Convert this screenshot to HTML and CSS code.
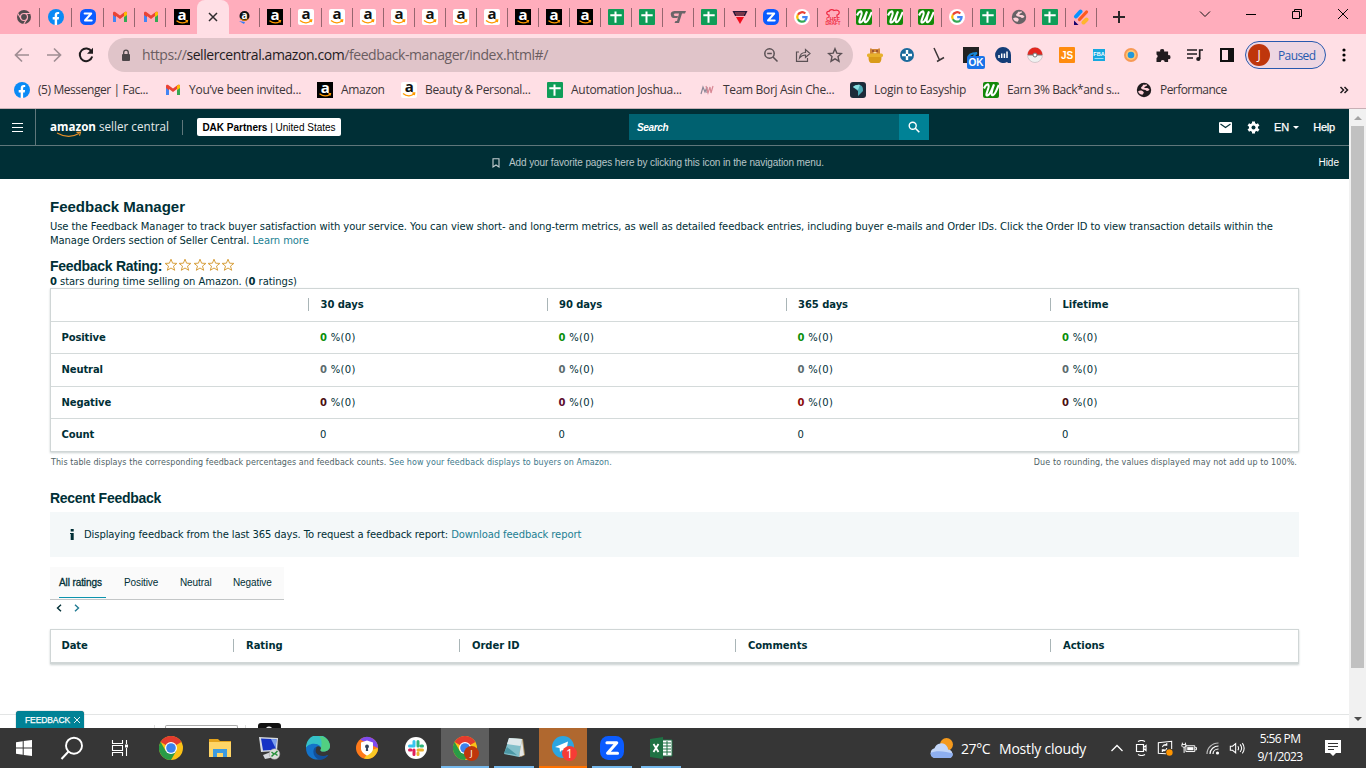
FILE: index.html
```html
<!DOCTYPE html>
<html lang="en">
<head>
<meta charset="utf-8">
<title>Feedback Manager</title>
<link rel="stylesheet" href="styles.css">
</head>
<body>

<!-- shared icons -->
<svg class="defs">
	<symbol id="fb" viewBox="0 0 16 16"><circle cx="8" cy="8" r="8" fill="#0a8af5"/><path d="M6.700 16v-5.600H4.700V8h2V6.300c0-2.100 1.200-3.200 3-3.200.8 0 1.500.1 1.500.1v1.900h-.9c-.9 0-1.200.6-1.200 1.200V8h2l-.4 2.400H9.100V16z" fill="#fff"/></symbol>
	<symbol id="zoom" viewBox="0 0 16 16"><rect width="16" height="16" rx="5.500" fill="#0b5cff"/><path d="M4.600 4.500h6.600L5 11.500h6.700" fill="none" stroke="#fff" stroke-width="2" stroke-linejoin="round" stroke-linecap="round"/></symbol>
	<symbol id="gmail" viewBox="0 0 16 16"><path d="M1 4v9h3V7z" fill="#4285f4"/><path d="M15 4v9h-3V7z" fill="#34a853"/><path d="M1 4c0-1.500 1.500-1.600 2.300-1L8 6.500 12.700 3c1-.7 2.300-.3 2.300 1l-3 3L8 10 4 7v1.300L1 6z" fill="#ea4335"/><path d="M12 3.700 13 3c1-.5 2 0 2 1.200V6l-3 2.300z" fill="#fbbc04"/></symbol>
	<symbol id="amzk" viewBox="0 0 16 16"><rect width="16" height="16" fill="#000"/><text x="8" y="10.500" text-anchor="middle" class="amz-a" fill="#fff">a</text><path d="M2.500 11.800c3.500 2.600 7.500 2.500 10.500.7M11.500 11.700l2-.1-.5 2" fill="none" stroke="#f90" stroke-width="1.200"/></symbol>
	<symbol id="amzw" viewBox="0 0 16 16"><rect width="16" height="16" rx="2" fill="#fff"/><text x="8" y="9.900" text-anchor="middle" class="amz-a" fill="#111">a</text><path d="M2 11.400c3.500 3 8 3 11 .7M11.300 11l2.400-.1-.4 2.300" fill="none" stroke="#f90" stroke-width="1.300"/></symbol>
	<symbol id="amzs" viewBox="0 0 16 16"><circle cx="8.500" cy="7" r="5" fill="#111"/><text x="8.500" y="10" text-anchor="middle" class="amz-s" fill="#fff">a</text><path d="M4 9.500c2 2 6 2.500 8.500.5" fill="none" stroke="#f90" stroke-width="1"/><path d="m3 12 6 1-1 2z" fill="#2f7df6"/></symbol>
	<symbol id="sheet" viewBox="0 0 16 16"><rect width="16" height="16" rx="1" fill="#0f9d58"/><path d="M2.300 6.200h11.400M7.500 2.500v11.200" stroke="#fff" stroke-width="2"/></symbol>
	<symbol id="goog" viewBox="0 0 16 16"><circle cx="8" cy="8" r="8" fill="#fff"/><g fill="none" stroke-width="2.200"><path d="M11.300 4.500A4.700 4.700 0 0 0 3.900 5.800" stroke="#ea4335"/><path d="M3.900 5.600a4.700 4.700 0 0 0 0 4.800" stroke="#fbbc05"/><path d="M3.900 10.200a4.700 4.700 0 0 0 7.300 1.300" stroke="#34a853"/><path d="M11 11.700a4.700 4.700 0 0 0 1.600-3.600H8.200" stroke="#4285f4"/></g></symbol>
	<symbol id="w" viewBox="0 0 16 16"><rect width="16" height="16" rx="2" fill="#138808"/><path d="M1 6.500C3 1.500 6.500 1 5.500 5.500 4.500 9.500 2 14 4.500 13.500 7.500 12.500 9 6.500 11 2.500 9 8 7.500 13.500 9.800 13.200 12.500 12.500 13.500 7.500 15.800 3" fill="none" stroke="#fff" stroke-width="2.100"/></symbol>
	<symbol id="chromeg" viewBox="0 0 16 16"><circle cx="8" cy="8" r="7" fill="#504a4d"/><circle cx="8" cy="8" r="3.500" fill="#504a4d" stroke="#ffadbc" stroke-width="1.200"/><path d="M8 4.500h6.500M5 9.800 1.800 4.500M11 9.800 7.800 15" stroke="#ffadbc" stroke-width="1.200"/></symbol>
	<symbol id="chrome" viewBox="0 0 24 24"><circle cx="12" cy="12" r="12" fill="#fbc116"/><path d="M12 12 1.600 6A12 12 0 0 1 22.400 6z" fill="#e33b2e"/><path d="M1.600 6A12 12 0 0 0 12 24l5.200-9L12 12 6.800 15z" fill="#299b46"/><circle cx="12" cy="12" r="6" fill="#fff"/><circle cx="12" cy="12" r="4.800" fill="#3b82ec"/></symbol>
	<symbol id="globe" viewBox="0 0 16 16"><circle cx="8" cy="8" r="7.200" fill="currentColor"/><path d="M2 9.500C4 8 6.500 8.500 7.500 10s-1 1.700-.8 2.800c-2 0-4-1.300-4.700-3.300zM7 2.500c1 1 3-.8 4.200.4C10.500 4.500 8 4 8.500 6c1.500.3 3-.8 5 1.500-.5 1.500-3 2-4 .5C8 7.500 5.500 7.500 5 6c.3-1.500 2-1.500 2-3.500z" fill="#ffd0d8"/></symbol>
	<symbol id="starline" viewBox="0 0 14 14"><path d="M7 1.200 8.600 5.200l4.300.2-3.400 2.700 1.200 4.200L7 10l-3.700 2.300 1.200-4.200L1.100 5.400l4.300-.2z" fill="#fff" stroke="#d8a13f" stroke-width="1"/></symbol>
</svg>

<div class="tabs">
	<div class="tab t32"><svg><use href="#chromeg"/></svg></div>
	<div class="tab t32"><svg><use href="#fb"/></svg></div>
	<div class="tab t32"><svg><use href="#zoom"/></svg></div>
	<div class="tab"><svg><use href="#gmail"/></svg></div>
	<div class="tab"><svg><use href="#gmail"/></svg></div>
	<div class="tab last"><svg><use href="#amzk"/></svg></div>
	<div class="tab active"><svg viewBox="0 0 16 16"><path d="m4 4 8 8M12 4l-8 8" stroke="#2f2b2d" stroke-width="1.500"/></svg></div>
	<div class="tab"><svg><use href="#amzs"/></svg></div>
	<div class="tab"><svg><use href="#amzk"/></svg></div>
	<div class="tab"><svg><use href="#amzw"/></svg></div>
	<div class="tab"><svg><use href="#amzw"/></svg></div>
	<div class="tab"><svg><use href="#amzw"/></svg></div>
	<div class="tab"><svg><use href="#amzw"/></svg></div>
	<div class="tab"><svg><use href="#amzw"/></svg></div>
	<div class="tab"><svg><use href="#amzw"/></svg></div>
	<div class="tab"><svg><use href="#amzw"/></svg></div>
	<div class="tab"><svg><use href="#amzk"/></svg></div>
	<div class="tab"><svg><use href="#amzk"/></svg></div>
	<div class="tab"><svg><use href="#amzk"/></svg></div>
	<div class="tab"><svg><use href="#sheet"/></svg></div>
	<div class="tab"><svg><use href="#sheet"/></svg></div>
	<div class="tab"><svg viewBox="0 0 16 16"><path d="M1 6.500C0 3 2.500 2 5.500 2H16l-1 2.500h-3L9 14H4.500l1-2H7l2-7.500H5.500c-2.500 0-2 2.500 0 2.500H8l-.6 2H3.500C2 9 1.300 8 1 6.500z" fill="#6a6468"/></svg></div>
	<div class="tab"><svg><use href="#sheet"/></svg></div>
	<div class="tab"><svg viewBox="0 0 16 16"><path d="M.5 2h15L13 7H3z" fill="#2a1a3a"/><path d="M3 4h10M4 6h8" stroke="#e66" stroke-width=".8"/><path d="M4 8h8l-4 7z" fill="#f00c1c"/></svg></div>
	<div class="tab"><svg><use href="#zoom"/></svg></div>
	<div class="tab"><svg><use href="#goog"/></svg></div>
	<div class="tab"><svg viewBox="0 0 16 16"><path d="M4 8V6C1 6 1 2 4 2.500 5 0 8 .5 9 1.500c3-1 6 0 5 3-.5 1.500-1.500 1-2 1.500v2" fill="none" stroke="#ee2740" stroke-width="1.200"/><text x="8" y="12" text-anchor="middle" class="chef">CHEF</text><text x="8" y="16" text-anchor="middle" class="chef small">DRAFT</text></svg></div>
	<div class="tab"><svg><use href="#w"/></svg></div>
	<div class="tab"><svg><use href="#w"/></svg></div>
	<div class="tab"><svg><use href="#w"/></svg></div>
	<div class="tab"><svg><use href="#goog"/></svg></div>
	<div class="tab"><svg><use href="#sheet"/></svg></div>
	<div class="tab"><svg class="grey"><use href="#globe"/></svg></div>
	<div class="tab"><svg><use href="#sheet"/></svg></div>
	<div class="tab"><svg viewBox="0 0 16 16"><path d="m3 7.500 4.500-5" stroke="#0a93ff" stroke-width="4" stroke-linecap="round"/><path d="m6.500 10.500 7-7.500" stroke="#ff5a1f" stroke-width="3.200" stroke-linecap="round"/><path d="m10.500 13.500 3-3" stroke="#ffb52e" stroke-width="4" stroke-linecap="round"/><path d="M1 11.500 5.500 16H1z" fill="#16006b"/></svg></div>
	<svg class="plus" viewBox="0 0 14 14"><path d="M7 1v12M1 7h12" stroke="#2b2628" stroke-width="2"/></svg>
	<div class="wincontrols">
		<svg viewBox="0 0 12 12"><path d="m1 3.500 5 5 5-5" fill="none" stroke="#111"/></svg>
		<svg viewBox="0 0 12 12"><path d="M1 6.500h10" stroke="#000"/></svg>
		<svg viewBox="0 0 12 12"><path d="M1.500 3.500h7v7h-7zM3.500 3.500v-2h7v7h-2" fill="none" stroke="#000"/></svg>
		<svg viewBox="0 0 12 12"><path d="m1 1 10 10M11 1 1 11" stroke="#000"/></svg>
	</div>
</div>

<div class="toolbar">
	<div class="nav">
		<svg viewBox="0 0 16 16"><path d="M15 8H2M8 1.500 1.500 8 8 14.500" fill="none" stroke="#a08e93" stroke-width="1.700"/></svg>
		<svg viewBox="0 0 16 16"><path d="M1 8h13M8 1.500 14.500 8 8 14.500" fill="none" stroke="#a08e93" stroke-width="1.700"/></svg>
		<svg viewBox="0 0 16 16"><path d="M13.500 4.500A6.300 6.300 0 1 0 14.200 9.500" fill="none" stroke="#1f1b1d" stroke-width="2"/><path d="M15 .8v6H9z" fill="#1f1b1d"/></svg>
	</div>
	<div class="omnibox">
		<svg class="lock" viewBox="0 0 10 13"><rect x="1" y="5" width="8" height="7" rx="1" fill="#4b4548"/><path d="M2.700 5.500V3.500a2.300 2.300 0 0 1 4.600 0v2" fill="none" stroke="#4b4548" stroke-width="1.300"/></svg>
		<span class="url">https://<b>sellercentral.amazon.com</b>/feedback-manager/index.html#/</span>
		<div class="omniicons">
			<svg viewBox="0 0 16 16"><circle cx="6.500" cy="6.500" r="4.700" fill="none" stroke="#5a5054" stroke-width="1.500"/><path d="m10 10 4.500 4.500M4.200 6.500h4.600" stroke="#5a5054" stroke-width="1.500"/></svg>
			<svg viewBox="0 0 16 16"><path d="M4 5H1.500v9.300h11V11M4.500 11c.5-4 3-5.500 6-5.500V2.500l4.500 4-4.500 4V8C8 8 6 9 4.500 11z" fill="none" stroke="#5a5054" stroke-width="1.200"/></svg>
			<svg viewBox="0 0 16 16"><path d="m8 1.700 1.800 4.400 4.700.4L11 9.600l1 4.600-4-2.400-4 2.400 1-4.600L1.500 6.500l4.700-.4z" fill="none" stroke="#5a5054" stroke-width="1.400"/></svg>
		</div>
	</div>
	<div class="exts">
		<svg viewBox="0 0 16 16"><path d="M3 7V3c0-2 1-2 2-1h6c1-1 2-1 2 1v4z" fill="#cf8437"/><path d="M6.500 5h3v1.500h-3z" fill="#f6d9a8"/><circle cx="6" cy="4" r=".7" fill="#402"/><circle cx="10" cy="4" r=".7" fill="#402"/><rect x="0" y="6.500" width="16" height="3.500" rx="1.500" fill="#e7b02c"/><path d="M1.500 10h13c0 4-1 6-3 6h-7c-2 0-3-2-3-6z" fill="#d99b1a"/></svg>
		<svg viewBox="0 0 16 16"><circle cx="8" cy="8" r="7" fill="#1b6a9c"/><path d="M8 3v4M8 9v4M3 8h4M9 8h4" stroke="#fff" stroke-width="2.400"/></svg>
		<svg viewBox="0 0 16 16"><path d="M3 1 8.500 13M6 14.500l7-4" stroke="#3b3537" stroke-width="1.500" fill="none"/></svg>
		<div class="okicon"><svg viewBox="0 0 16 16"><rect width="16" height="16" fill="#222"/><path d="M5 12c0-4 3-6 9-6-2 1-3 2-3 4" fill="none" stroke="#1688d8" stroke-width="2"/></svg><span>OK</span></div>
		<svg viewBox="0 0 16 16"><path d="M8 0a8 8 0 0 1 8 8v8h-3l-1-1A8 8 0 1 1 8 0z" fill="#143e78"/><path d="M4 11V8M6.700 11V6.500M9.400 11V6.500M12 11V4.500" stroke="#fff" stroke-width="1.500"/></svg>
		<svg viewBox="0 0 16 16"><circle cx="8" cy="8" r="7.500" fill="#f1f1f1" stroke="#bcb2b5" stroke-width=".6"/><path d="M.5 8a7.500 7.500 0 0 1 15 0z" fill="#e3261f"/><path d="M1 8h14" stroke="#777"/><circle cx="8" cy="8" r="2" fill="#fff" stroke="#777"/></svg>
		<svg viewBox="0 0 16 16"><rect width="16" height="16" rx="1" fill="#ff8c0f"/><text x="8" y="12" text-anchor="middle" class="js">JS</text></svg>
		<svg viewBox="0 0 16 16"><rect x="2" y="2" width="12" height="12" fill="#16a8df"/><text x="8" y="9" text-anchor="middle" class="fba">FBA</text><path d="M3.500 11.500h9" stroke="#9bdcf5"/></svg>
		<svg viewBox="0 0 16 16"><circle cx="8" cy="8" r="7" fill="#f79a55"/><circle cx="8" cy="8" r="5" fill="#ffc875"/><circle cx="8" cy="8" r="3.300" fill="#2298db"/></svg>
		<svg viewBox="0 0 16 16"><path d="M1.500 4.500h3.700a2 2 0 1 1 3.900 0h4v3.700a2 2 0 1 1 0 3.900v3H9.700a2 2 0 0 0-4 0H1.500V11a2 2 0 0 0 0-3.600z" fill="#211c1f"/></svg>
		<svg viewBox="0 0 16 16"><path d="M0 3h10M0 7h10M0 11h6" stroke="#211c1f" stroke-width="1.700"/><path d="M12.700 12V3H16" fill="none" stroke="#211c1f" stroke-width="1.700"/><circle cx="11.300" cy="12" r="2.100" fill="#211c1f"/></svg>
		<svg viewBox="0 0 16 16"><path d="M2 2h12v12H2z" fill="none" stroke="#111" stroke-width="2"/><path d="M9 2h5v12H9z" fill="#111"/></svg>
	</div>
	<div class="profile"><i>J</i><span>Paused</span></div>
	<svg class="dots" viewBox="0 0 4 14"><circle cx="2" cy="2" r="1.600"/><circle cx="2" cy="7" r="1.600"/><circle cx="2" cy="12" r="1.600"/></svg>
</div>

<div class="bookmarks">
	<div class="bm b1"><svg><use href="#fb"/></svg><span>(5) Messenger | Fac...</span></div>
	<div class="bm b2"><svg><use href="#gmail"/></svg><span>You’ve been invited...</span></div>
	<div class="bm b3"><svg><use href="#amzk"/></svg><span>Amazon</span></div>
	<div class="bm b4"><svg><use href="#amzw"/></svg><span>Beauty &amp; Personal...</span></div>
	<div class="bm b5"><svg><use href="#sheet"/></svg><span>Automation Joshua...</span></div>
	<div class="bm b6"><svg viewBox="0 0 16 16"><path d="M2 12 4 5l2 5 2-5v6" fill="none" stroke="#8b8796" stroke-width="1.200"/><path d="m7 4 2 7 2-6 1 6 2-7" fill="none" stroke="#d88995" stroke-width="1.200"/></svg><span>Team Borj Asin Che...</span></div>
	<div class="bm b7"><svg viewBox="0 0 16 16"><rect width="16" height="16" rx="3" fill="#1c2b3a"/><path d="M3 5c2-2 5-2.500 7-2 3 1 3 3.500 3 6l-5 5V9z" fill="#4aa9b5"/><path d="M3 5c2-2 5-2.500 7-2-1 1-1 3-2 5z" fill="#8be0e3"/></svg><span>Login to Easyship</span></div>
	<div class="bm b8"><svg><use href="#w"/></svg><span>Earn 3% Back*and s...</span></div>
	<div class="bm b9"><svg class="dark"><use href="#globe"/></svg><span>Performance</span></div>
	<svg class="more" viewBox="0 0 10 10"><path d="M1.500 2 4.500 5l-3 3M5.500 2l3 3-3 3" fill="none" stroke="#211c1f" stroke-width="1.500"/></svg>
</div>

<div class="window">
	<div class="page">
		<div class="header">
			<div class="burger"><svg viewBox="0 0 12 10"><path d="M0 1.500h11M0 5.500h11M0 9.500h11" stroke="#fff" stroke-width="1"/></svg></div>
			<svg class="logo" viewBox="0 0 122 24"><text x="0" y="14" textLength="46" lengthAdjust="spacingAndGlyphs" class="lg1">amazon</text><text x="49" y="14" textLength="70" lengthAdjust="spacingAndGlyphs" class="lg2">seller central</text><path d="M7 16c8 4.500 15 4.500 22 .5M26.500 15.300l4-.2-1 3.600" fill="none" stroke="#e8912a" stroke-width="1.200"/></svg>
			<div class="vline"></div>
			<div class="account"><b>DAK Partners</b> | United States</div>
			<div class="search"><span>Search</span><div class="go"><svg viewBox="0 0 12 12"><circle cx="4.700" cy="4.700" r="3.500" fill="none" stroke="#fff" stroke-width="1.400"/><path d="m7.300 7.300 4 4" stroke="#fff" stroke-width="1.600"/></svg></div></div>
			<div class="tools">
				<svg class="mail" viewBox="0 0 13 11"><rect width="13" height="11" rx="1" fill="#fff"/><path d="m1.500 2 5 3.500 5-3.500" fill="none" stroke="#002f36" stroke-width="1.100"/></svg>
				<svg class="gear" viewBox="0 0 13 13"><path d="M6.500.5v12M1.300 3.500l10.400 6M1.300 9.500l10.400-6" stroke="#fff" stroke-width="3"/><circle cx="6.500" cy="6.500" r="4.500" fill="#fff"/><circle cx="6.500" cy="6.500" r="2" fill="#002f36"/></svg>
				<span class="lang">EN</span><i class="caret"></i><span class="help">Help</span>
			</div>
		</div>
		<div class="favorites">
			<svg viewBox="0 0 8 10"><path d="M1 .7h6v8.300L4 7 1 9z" fill="none" stroke="#c5d0d2" stroke-width="1.100"/></svg>
			<span class="favtext">Add your favorite pages here by clicking this icon in the navigation menu.</span>
			<span class="hide">Hide</span>
		</div>

		<div class="content">
			<h1>Feedback Manager</h1>
			<p class="intro">Use the Feedback Manager to track buyer satisfaction with your service. You can view short- and long-term metrics, as well as detailed feedback entries, including buyer e-mails and Order IDs. Click the Order ID to view transaction details within the<br>Manage Orders section of Seller Central. <a>Learn more</a></p>
			<div class="rating">
				<h2>Feedback Rating:</h2>
				<svg><use href="#starline"/></svg><svg><use href="#starline"/></svg><svg><use href="#starline"/></svg><svg><use href="#starline"/></svg><svg><use href="#starline"/></svg>
			</div>
			<p class="stars"><b>0</b> stars during time selling on Amazon. (<b>0</b> ratings)</p>

			<div class="summary">
				<div class="row head"><div></div><div>30 days</div><div>90 days</div><div>365 days</div><div>Lifetime</div></div>
				<div class="row short pos"><div>Positive</div><div><b>0</b> %(0)</div><div><b>0</b> %(0)</div><div><b>0</b> %(0)</div><div><b>0</b> %(0)</div></div>
				<div class="row neu"><div>Neutral</div><div><b>0</b> %(0)</div><div><b>0</b> %(0)</div><div><b>0</b> %(0)</div><div><b>0</b> %(0)</div></div>
				<div class="row short neg"><div>Negative</div><div><b class="n1">0</b> %(0)</div><div><b class="n2">0</b> %(0)</div><div><b class="n3">0</b> %(0)</div><div><b class="n1">0</b> %(0)</div></div>
				<div class="row"><div>Count</div><div>0</div><div>0</div><div>0</div><div>0</div></div>
			</div>
			<div class="notes">
				<span class="noteleft">This table displays the corresponding feedback percentages and feedback counts. <a>See how your feedback displays to buyers on Amazon.</a></span>
				<span class="noteright">Due to rounding, the values displayed may not add up to 100%.</span>
			</div>

			<h3>Recent Feedback</h3>
			<div class="alert">
				<svg viewBox="0 0 4 11"><path d="M.7 0h3v2.500h-3zM0 4h3.700v7H.7V5H0z" fill="#002f36"/></svg>
				<span>Displaying feedback from the last 365 days. To request a feedback report: <a>Download feedback report</a></span>
			</div>
			<div class="filters">
				<span class="f1">All ratings</span><span class="f2">Positive</span><span class="f3">Neutral</span><span class="f4">Negative</span>
			</div>
			<div class="pager">
				<svg viewBox="0 0 6 8"><path d="M5 .7 1.500 4 5 7.300" fill="none" stroke="#002f36" stroke-width="1.400"/></svg>
				<svg viewBox="0 0 6 8"><path d="M1 .7 4.500 4 1 7.300" fill="none" stroke="#1f7a92" stroke-width="1.400"/></svg>
			</div>
			<div class="recent"><div>Date</div><div>Rating</div><div>Order ID</div><div>Comments</div><div>Actions</div></div>
		</div>

		<div class="footer">
			<i class="fline l1"></i><i class="fbox"></i><i class="fline l2"></i><i class="fdark"></i>
		</div>
		<div class="feedbacktab"><span>FEEDBACK</span><svg viewBox="0 0 8 8"><path d="m1 1 6 6M7 1 1 7" stroke="#fff" stroke-width=".9"/></svg></div>
	</div>
	<div class="scrollbar">
		<svg viewBox="0 0 8 5"><path d="M0 5 4 1l4 4z" fill="#a3a3a3"/></svg>
		<div class="thumb"></div>
		<svg viewBox="0 0 8 5"><path d="M0 0h8L4 4z" fill="#4e4e4e"/></svg>
	</div>
</div>

<div class="taskbar">
	<div class="task start"><svg viewBox="0 0 24 24"><path d="M4 6.200 10.700 5.200v6.300H4zM11.700 5 20 4v7.500h-8.300zM4 12.500h6.700v6.300L4 17.800zM11.700 12.500H20V20l-8.300-1z" fill="#fff"/></svg></div>
	<div class="task"><svg viewBox="0 0 24 24"><circle cx="14" cy="9.700" r="8" fill="none" stroke="#fff" stroke-width="1.900"/><path d="m8.500 15.500-7 7.500" stroke="#fff" stroke-width="2"/></svg></div>
	<div class="task view"><svg viewBox="0 0 24 24"><path d="M4.500 4v3.500h10V4M4.500 20v-3.500h10V20M4.500 9.500h10v5h-10zM18.500 4v4M18.500 12v8" fill="none" stroke="#fff" stroke-width="1.100"/><path d="M17 8.500h3v3h-3z" fill="#fff"/></svg></div>
	<div class="task"><svg><use href="#chrome"/></svg></div>
	<div class="task"><svg viewBox="0 0 24 24"><path d="M1 3h9l2 2h11v16H1z" fill="#e4a31b"/><path d="M1 6h22v15H1z" fill="#ffd566"/><path d="M5 21v-8h14v8h-4v-4H9v4z" fill="#3d9be0"/></svg></div>
	<div class="task"><svg viewBox="0 0 24 24"><path d="M2 1 21 2l-1 13-16 1z" fill="#d8dce2"/><path d="m4 2.500 15.500.7-1 10.500L6 14.500z" fill="#1633c4"/><path d="m14 3 5.500.2-.9 9z" fill="#7da0ee"/><path d="m6 19 8-3 4 5-10 2z" fill="#d5d8dd"/><circle cx="17.500" cy="18" r="5.300" fill="#dcdedb" stroke="#999" stroke-width=".5"/><path d="m14.500 16 2.500 2-2.500 2.500M20.500 15l-2.500 2.500 2.500 2" fill="none" stroke="#27903a" stroke-width="1.500"/></svg></div>
	<div class="task"><svg viewBox="0 0 24 24"><path d="M0 12A12 12 0 0 1 24 10c0 4-4 6-8 5.500-2-.3-1.500-1.500-1-3C15 9 7 6 0 12z" fill="#35c1c8"/><path d="M13 0c7 .5 11 5 11 10 0 4-4 6-8 5.500-2-.3-1.500-1.500-1-3 1-5 1-9-2-12.500z" fill="#5cd36a" opacity=".75"/><path d="M0 12c2-5 12-6 14.500-1C11 9 8 12 9 16c1 4 7 6 13 3-5 7-22 7-22-7z" fill="#1473ca"/><path d="M8.800 11.500c-3 4-1 10 4.200 12.300 4 .3 8-2 9.500-5-5 2.500-11 1-12.500-2.300-.7-1.800-.2-3.500.7-5z" fill="#124f99"/></svg></div>
	<div class="task"><svg viewBox="0 0 24 24"><circle cx="12" cy="12" r="11" fill="#ff7a1a"/><path d="M5 3.500A11 11 0 0 1 23 12l-7-3z" fill="#7f4bf0"/><path d="M23 12A11 11 0 0 1 9 22.500l6-8z" fill="#f9c825"/><path d="m12 4.500 6 2v6c0 3.500-3 5.500-6 7-3-1.500-6-3.500-6-7v-6z" fill="#fff"/><circle cx="12" cy="10.500" r="1.900" fill="#33455e"/><path d="M11.200 11h1.600l.4 4h-2.400z" fill="#33455e"/></svg></div>
	<div class="task"><svg viewBox="0 0 24 24"><circle cx="12" cy="12" r="11" fill="#fff"/><g stroke-width="3" stroke-linecap="round"><path d="M10 5.500V10M5.500 10H10" stroke="#36c5f0"/><path d="M14 5.500V10M18.500 10H17" stroke="#2eb67d"/><path d="M14 14h4.500M14 18.500V17" stroke="#ecb22e"/><path d="M10 14v4.500M5.500 14H7" stroke="#e01e5a"/></g></svg></div>
	<div class="task current"><svg><use href="#chrome"/></svg><i class="jbadge">J</i></div>
	<div class="task open notepad"><svg viewBox="0 0 24 24"><path d="m7 2 14 1 2 16-4 2z" fill="#a98d5a"/><path d="M7 2 20 3l-3 18-15-3z" fill="#82bfca"/><path d="M7 2 20 3l-1.500 7L5 8z" fill="#dfe9ec"/><path d="m20 3 2 16-5 2z" fill="#e4e6e6"/><path d="m5 11 10 8-13-2z" fill="#4b97a5"/></svg></div>
	<div class="task telegram"><svg viewBox="0 0 24 24"><circle cx="12" cy="12" r="11" fill="#2ca5e0"/><path d="m4 12 13-5.500-2 11.500-4-3-2 2-.5-4z" fill="#fff"/></svg><i class="count">1</i></div>
	<div class="task open zoomapp"><svg><use href="#zoom"/></svg></div>
	<div class="task open excel"><svg viewBox="0 0 24 24"><path d="M12 4h11v16H12z" fill="#fff" stroke="#217346"/><path d="M14 7h8M14 10h8M14 13h8M14 16h8M18 5v14" stroke="#217346"/><path d="m1 3 13-2v22L1 21z" fill="#1f7244"/><path d="m4.500 8 5 8M9.500 8l-5 8" stroke="#fff" stroke-width="1.800"/></svg></div>

	<div class="weather"><svg viewBox="0 0 26 22"><circle cx="17.500" cy="7.500" r="6.500" fill="#f59a1d"/><path d="M6 21a5 5 0 0 1-.5-9.800A7 7 0 0 1 18 9.500c.8 1 1 2 1 3a4.500 4.500 0 0 1 2 8.500z" fill="#c3d6f8"/><path d="M6 21a5 5 0 0 1-4.500-5c5-3 15-2 22.500.5 0 2.500-1.500 4.500-3.500 4.500z" fill="#8eaff0"/></svg><span class="temp">27°C</span><span class="sky">Mostly cloudy</span></div>
	<div class="tray">
		<svg viewBox="0 0 16 16"><path d="m2.500 11 5.500-5.500 5.500 5.500" fill="none" stroke="#fff" stroke-width="1.300"/></svg>
		<svg viewBox="0 0 16 16"><path d="M5 1.500C7 .3 10 .3 12 1.500M5 14.500c2 1.200 5 1.200 7 0M3.500 4.500h7v7h-7zM10.500 7.500 13 5.500v5l-2.500-2z" fill="none" stroke="#fff" stroke-width="1.200"/></svg>
		<svg viewBox="0 0 18 18"><path d="M10 15.500 1.500 15V3L16.500 1.500V10M11 5.500A4 4 0 0 0 6 8M6 12a4 4 0 0 0 5-3M11 3.500v2.500H8.500M6 13.500V11h2.500" fill="none" stroke="#fff" stroke-width="1.200"/><circle cx="14" cy="14" r="3.600" fill="#ff9500"/></svg>
		<svg viewBox="0 0 18 16"><path d="M5.500 5.500h10v6.500h-10zM16 7.500h1.500V10H16M3.500 7v6.500M1.500 2v2M5 2v2M1 4h4.500v2C5 7.500 1.500 7.500 1 6z" fill="none" stroke="#fff" stroke-width="1.100"/><path d="M7 7h7v3.500H7z" fill="#fff"/></svg>
		<svg viewBox="0 0 16 16"><g fill="none" stroke="#fff" stroke-width="1.200"><path d="M2 14C2 8 7 3 13.500 3" opacity=".65"/><path d="M5 14c0-4.500 4-8 8.500-8"/><path d="M8 14c0-3 2.500-5 5.500-5"/></g><circle cx="12.500" cy="13" r="1.600" fill="#fff"/></svg>
		<svg viewBox="0 0 18 16"><path d="M1.500 6H4l3.500-3v10.500L4 10.500H1.500zM10 6c1 1.500 1 3 0 4.500M12.500 4c2 2.500 2 6 0 8.500M15 2.500c2.500 3.500 2.500 8 0 11.500" fill="none" stroke="#fff" stroke-width="1.200"/></svg>
	</div>
	<div class="clock"><span>5:56 PM</span><span>9/1/2023</span></div>
	<svg class="notif" viewBox="0 0 16 16"><path d="M0 0h16v13h-5l-3 3-3-3H0z" fill="#fff"/><path d="M3 3.500h10M3 6.500h10M3 9.500h6" stroke="#333" stroke-width="1"/></svg>
</div>

</body>
</html>
```
FILE: styles.css
```css
*{
	box-sizing: border-box;
}
body{
	margin: 0;
	width: 1366px;
	height: 768px;
	overflow: hidden;
	display: flex;
	flex-direction: column;
	background: #fff;
	color: #002f36;
	font-family: "DejaVu Sans", Verdana, sans-serif;
	font-size: 10px;
}
svg{
	display: block;
	flex: none;
}
i{
	font-style: normal;
}
.defs{
	display: none;
}

/* tab strip */
.tabs{
	display: flex;
	height: 34px;
	padding-left: 8px;
	background: #ffadbc;
}
.tab{
	display: flex;
	align-items: center;
	justify-content: center;
	width: 31px;
	height: 34px;
	background: linear-gradient(#96666f,#96666f) right 8px / 1px 19px no-repeat;
}
.tab svg{
	width: 16px;
	height: 16px;
}
.t32{
	width: 32px;
}
.tab.last{
	background: none;
}
.tab.active{
	background: #ffdfe5;
	border-radius: 8px 8px 0 0;
	width: 32px;
}
.active ~ .tab{
	padding-right: 1px;
}
.amz-a{
	font: bold 15px "Open Sans", sans-serif;
}
.amz-s{
	font: bold 10px "Open Sans", sans-serif;
}
.chef{
	font: bold 5px "Liberation Sans", sans-serif;
	fill: #ee2740;
}
.chef.small{
	font-size: 4.5px;
}
.grey{
	color: #686266;
}
.dark{
	color: #1f1b1e;
}
.plus{
	width: 14px;
	height: 14px;
	margin: 10px 0 0 15px;
}
.wincontrols{
	display: flex;
	gap: 34px;
	margin: 8px 17px 0 auto;
}
.wincontrols svg{
	width: 12px;
	height: 12px;
}

/* address bar */
.toolbar{
	display: flex;
	align-items: center;
	height: 42px;
	padding-left: 14px;
	background: #ffdfe5;
}
.nav{
	display: flex;
	gap: 16px;
	width: 94px;
}
.nav svg{
	width: 16px;
	height: 16px;
}
.omnibox{
	display: flex;
	align-items: center;
	width: 745px;
	height: 34px;
	padding-left: 13px;
	border-radius: 17px;
	background: #e0c4c9;
}
.lock{
	width: 10px;
	height: 13px;
	margin-right: 11px;
}
.url{
	font: 14px/20px "Open Sans", sans-serif;
	letter-spacing: -.42px;
	color: #6a5d61;
	white-space: nowrap;
}
.url b{
	font-weight: normal;
	color: #1f1b1e;
}
.omniicons{
	display: flex;
	gap: 16px;
	margin: 0 10px 0 auto;
}
.omniicons svg,
.exts svg{
	width: 16px;
	height: 16px;
}
.exts{
	display: flex;
	gap: 16px;
	margin-left: 14px;
}
.okicon{
	position: relative;
}
.okicon span{
	position: absolute;
	left: 4px;
	top: 9px;
	width: 18px;
	height: 13px;
	border-radius: 2px;
	background: #1a73e8;
	color: #fff;
	font: bold 10px/13px "Liberation Sans", sans-serif;
	text-align: center;
}
.js{
	font: bold 10px "Liberation Sans", sans-serif;
	fill: #fff;
}
.fba{
	font: bold 5.5px "Liberation Sans", sans-serif;
	fill: #fff;
}
.profile{
	display: flex;
	align-items: center;
	width: 81px;
	height: 28px;
	margin-left: 10px;
	padding-left: 2px;
	border: 1px solid #2759ae;
	border-radius: 14px;
	background: #edd6e2;
	color: #2759ae;
	font: 12px "Open Sans", sans-serif;
}
.profile i{
	width: 22px;
	height: 22px;
	margin-right: 8px;
	border-radius: 50%;
	background: #bf360c;
	color: #fff;
	line-height: 22px;
	text-align: center;
}
.profile span{
	letter-spacing: -.6px;
}
.dots{
	width: 4px;
	height: 14px;
	margin-left: 16px;
}

/* bookmarks */
.bookmarks{
	display: flex;
	align-items: center;
	height: 33px;
	padding: 0 0 4px 14px;
	border-bottom: 1px solid #c7b0b5;
	background: #ffdfe5;
}
.bm{
	display: flex;
	align-items: center;
	gap: 8px;
	font: 12px/16px "Open Sans", sans-serif;
	letter-spacing: -.33px;
	color: #3c3538;
	white-space: nowrap;
}
.bm svg{
	width: 16px;
	height: 16px;
}
.b1{ width: 151px; letter-spacing: -.42px; }
.b2{ width: 152px; letter-spacing: -.25px; }
.b3{ width: 84px; }
.b4{ width: 146px; }
.b5{ width: 152px; letter-spacing: -.28px; }
.b6{ width: 151px; }
.b7{ width: 133px; letter-spacing: -.27px; }
.b8{ width: 153px; letter-spacing: -.42px; }
.b9{ letter-spacing: -.55px; }
.more{
	width: 10px;
	height: 10px;
	margin: 0 17px 0 auto;
}

/* page */
.window{
	display: flex;
	height: 619px;
}
.page{
	position: relative;
	width: 1349px;
	display: flex;
	flex-direction: column;
}
.header{
	display: flex;
	align-items: center;
	height: 37px;
	border-bottom: 1px solid #5f777b;
	background: #002f36;
	color: #fff;
	font-family: "Liberation Sans", Arial, sans-serif;
}
.burger{
	width: 36px;
	height: 36px;
	padding: 13px 0 0 12px;
	border-right: 1px solid #5f777b;
}
.burger svg{
	width: 12px;
	height: 10px;
}
.logo{
	width: 122px;
	height: 24px;
	margin: 4px 0 0 14px;
	overflow: visible;
}
.lg1{
	font: bold 13px "Open Sans", sans-serif;
	fill: #fff;
}
.lg2{
	font: 13.5px "Open Sans", sans-serif;
	fill: #e3e9ea;
}
.vline{
	width: 1px;
	height: 15px;
	margin-left: 10px;
	background: #5f777b;
}
.account{
	width: 144px;
	height: 18px;
	margin-left: 14px;
	border-radius: 2px;
	background: #fff;
	color: #000;
	font-size: 10px;
	line-height: 19px;
	text-align: center;
	white-space: nowrap;
}
.search{
	display: flex;
	width: 300px;
	height: 26px;
	margin-left: 288px;
	background: #006170;
}
.search span{
	flex: 1;
	padding-left: 8px;
	font: italic bold 10px/27px "Liberation Sans", sans-serif;
	letter-spacing: -.35px;
}
.go{
	width: 30px;
	padding: 7px 0 0 9px;
	background: #008296;
}
.go svg{
	width: 12px;
	height: 12px;
}
.tools{
	display: flex;
	align-items: center;
	margin: 0 14px 0 auto;
	font-size: 11px;
	-webkit-text-stroke: .25px #fff;
}
.help{
	letter-spacing: -.2px;
}
.mail{
	width: 13px;
	height: 11px;
	margin-right: 15px;
}
.gear{
	width: 13px;
	height: 13px;
	margin-right: 14px;
}
.caret{
	margin: 1px 14px 0 4px;
	border: 3px solid transparent;
	border-top-color: #fff;
	border-bottom: 0;
}
.favorites{
	display: flex;
	align-items: center;
	height: 33px;
	padding-left: 492px;
	background: #002f36;
	color: #b9c6c8;
	font: 10px "Liberation Sans", Arial, sans-serif;
}
.favorites svg{
	width: 8px;
	height: 10px;
	margin-right: 9px;
}
.favtext{
	letter-spacing: -.11px;
	white-space: nowrap;
}
.hide{
	margin: 0 10px 0 auto;
	color: #fff;
}

.content{
	padding: 19px 50px 0;
}
h1,h2,h3,p{
	margin: 0;
}
h1,h2,h3{
	font-family: "Liberation Sans", Arial, sans-serif;
	white-space: nowrap;
}
h1{
	font-size: 15px;
	line-height: 18px;
}
h2,h3{
	font-size: 14px;
	line-height: 18px;
	letter-spacing: -.28px;
}
a{
	color: #1c7f93;
}
.intro{
	margin-top: 4px;
	line-height: 14px;
	letter-spacing: -.085px;
	white-space: nowrap;
}
.rating{
	display: flex;
	height: 18px;
	margin-top: 9px;
}
.rating svg{
	width: 14px;
	height: 14px;
	margin: 1px .3px 0 0;
}
.rating h2{
	width: 114px;
}
.stars{
	line-height: 13px;
	letter-spacing: -.06px;
}
.summary{
	height: 164px;
	border: 1px solid #d0d6d6;
	box-shadow: 0 1px 2px #c9d0d0;
}
.row{
	display: grid;
	grid-template-columns: 257px 238.5px 239px 264.5px 1fr;
	align-items: center;
	height: 33px;
	padding-bottom: 1px;
	border-bottom: 1px solid #d4dada;
}
.row:last-child{
	height: 32px;
	border-bottom: 0;
}
.row.short{
	height: 32px;
	padding-bottom: 0;
}
.row > div{
	padding-left: 12px;
	letter-spacing: .3px;
}
.row.head > div,
.recent > div{
	height: 13px;
	line-height: 14px;
	font-weight: bold;
	letter-spacing: -.05px;
	border-left: 1px solid #a9b5b7;
	padding-left: 12px;
}
.row.head > div{
	padding-left: 11.5px;
}
.row > div:first-child,
.row.head > div:first-child,
.recent > div:first-child{
	padding-left: 10.5px;
	font-weight: bold;
	letter-spacing: -.12px;
	border-left: 0;
}
.pos b{ color: #0a8f0a; }
.neu b{ color: #5c6b6e; }
.n1{ color: #4a1010; }
.n2{ color: #5c0a2e; }
.n3{ color: #8c0a0a; }
.notes{
	display: flex;
	justify-content: space-between;
	padding: 0 2px 0 1px;
	margin-top: 6px;
	line-height: 10px;
	font-size: 8px;
	color: #4f6266;
	white-space: nowrap;
}
.noteleft{
	letter-spacing: .07px;
}
.noteright{
	letter-spacing: .1px;
}
.notes a{
	color: #41798c;
}
h3{
	margin-top: 21px;
}
.alert{
	display: flex;
	align-items: center;
	height: 45px;
	margin-top: 5px;
	padding-left: 20px;
	background: #f4f8f9;
	letter-spacing: -.1px;
	white-space: nowrap;
}
.alert svg{
	width: 4px;
	height: 11px;
	margin-right: 10px;
}
.filters{
	display: flex;
	width: 234px;
	height: 33px;
	margin-top: 10px;
	padding-left: 9px;
	border-bottom: 1px solid #c3c6c7;
	background: #fafafa;
	font: 10px/32px "Liberation Sans", Arial, sans-serif;
	letter-spacing: -.1px;
}
.f1{
	width: 47px;
	height: 31px;
	border-bottom: 1px solid #0c93ad;
	margin-right: 18px;
	-webkit-text-stroke: .3px #002f36;
	white-space: nowrap;
}
.f2{ width: 56px; }
.f3{ width: 53px; }
.pager{
	display: flex;
	gap: 12px;
	padding: 4px 0 0 6px;
}
.pager svg{
	width: 6px;
	height: 8px;
}
.recent{
	display: grid;
	grid-template-columns: 182px 226px 276px 315px 1fr;
	align-items: center;
	height: 35px;
	margin-top: 17px;
	padding-bottom: 1px;
	border: 1px solid #d0d6d6;
	border-bottom-width: 2px;
	box-shadow: 0 1px 2px #c9d0d0;
}
.footer{
	display: flex;
	height: 14px;
	margin-top: auto;
	padding: 10px 0 0 154px;
	border-top: 1px solid #e3e5e5;
	overflow: hidden;
}
.fline{
	width: 1px;
	height: 5px;
	background: #ddd;
}
.fbox{
	width: 73px;
	height: 5px;
	margin-left: 10px;
	border: 1px solid #aaa;
	border-bottom: 0;
	border-radius: 2px 2px 0 0;
}
.l2{
	margin-left: 7px;
}
.fdark{
	width: 23px;
	height: 6px;
	margin: -2px 0 0 12px;
	border-radius: 3px 3px 0 0;
	background: radial-gradient(circle at 11px 7px, #eee 3px, #111 4px);
}
.feedbacktab{
	position: absolute;
	left: 16px;
	bottom: 0;
	display: flex;
	align-items: center;
	width: 68px;
	height: 17px;
	padding-left: 9px;
	border-radius: 3px 3px 0 0;
	background: #008296;
	box-shadow: 0 0 1px #444;
	color: #fff;
	font: 8.5px "Liberation Sans", Arial, sans-serif;
	-webkit-text-stroke: .25px #fff;
}
.feedbacktab span{
	width: 48px;
	letter-spacing: -.1px;
}
.feedbacktab svg{
	width: 8px;
	height: 8px;
}
.scrollbar{
	display: flex;
	flex-direction: column;
	align-items: center;
	width: 17px;
	padding: 6px 0 6px;
	background: #f1f1f1;
}
.scrollbar svg{
	width: 8px;
	height: 5px;
}
.thumb{
	width: 13px;
	height: 542px;
	margin: 6px 0 auto;
	background: #c1c1c1;
}

/* taskbar */
.taskbar{
	display: flex;
	height: 40px;
	background: #363636;
	color: #fff;
	font-family: "Open Sans", sans-serif;
}
.task{
	position: relative;
	display: flex;
	align-items: center;
	justify-content: center;
	width: 49px;
	height: 40px;
}
.task.start,
.task:nth-child(2){
	width: 48px;
}
.task svg{
	width: 24px;
	height: 24px;
}
.task.view{
	width: 50px;
	padding-right: 2px;
}
.task.current{
	width: 48px;
	margin-left: 1px;
	border-bottom: 2px solid #76b9ed;
	background: #5e5e5e;
	padding-top: 2px;
}
.task.open{
	background: linear-gradient(#76b9ed,#76b9ed) center bottom / 40px 2px no-repeat;
}
.task.notepad{
	width: 50px;
}
.task.telegram{
	width: 48px;
	border-bottom: 2px solid #ff7200;
	background: #b0682f;
}
.jbadge,
.count{
	position: absolute;
	left: 23px;
	top: 18px;
	width: 15px;
	height: 15px;
	border-radius: 50%;
	background: #bf360c;
	font-size: 9px;
	line-height: 15px;
	text-align: center;
}
.count{
	background: #f63c36;
	font-size: 12px;
}
.weather{
	display: flex;
	align-items: center;
	margin-left: auto;
	font-size: 14px;
}
.weather svg{
	width: 26px;
	height: 22px;
}
.temp{
	width: 38px;
	margin-left: 6px;
	letter-spacing: -.4px;
}
.sky{
	width: 110px;
	letter-spacing: -.2px;
	white-space: nowrap;
}
.tray{
	display: flex;
	align-items: center;
	gap: 8px;
}
.tray svg{
	width: 16px;
	height: 16px;
}
.clock{
	display: flex;
	flex-direction: column;
	align-items: center;
	width: 69px;
	padding: 2px 0 0 1px;
	font-size: 12px;
	line-height: 18px;
	letter-spacing: -.6px;
}
.notif{
	width: 16px;
	height: 16px;
	margin: 12px 25px 0 11px;
}
```
